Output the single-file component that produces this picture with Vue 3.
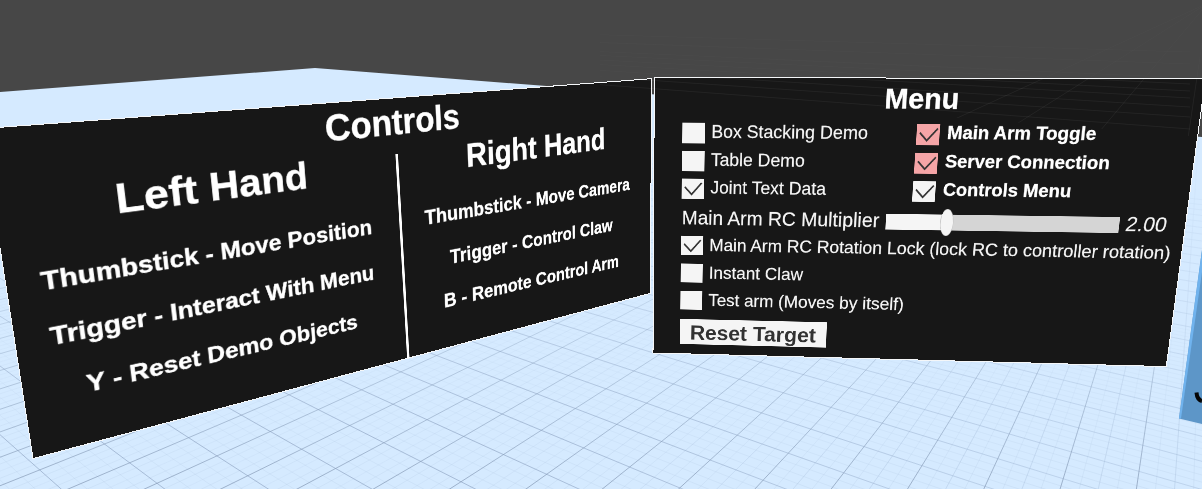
<script setup>
import { ref } from 'vue'

// Column-major matrix3d that maps a w x h box onto four screen corners (tl, tr, br, bl).
function project(w, h, [[x0, y0], [x1, y1], [x2, y2], [x3, y3]]) {
  const dx1 = x1 - x2, dx2 = x3 - x2, dx3 = x0 - x1 + x2 - x3
  const dy1 = y1 - y2, dy2 = y3 - y2, dy3 = y0 - y1 + y2 - y3
  const d = dx1 * dy2 - dx2 * dy1
  const g = (dx3 * dy2 - dx2 * dy3) / d
  const k = (dx1 * dy3 - dx3 * dy1) / d
  const m = [
    (x1 - x0 + g * x1) / w, (y1 - y0 + g * y1) / w, 0, g / w,
    (x3 - x0 + k * x3) / h, (y3 - y0 + k * y3) / h, 0, k / h,
    0, 0, 1, 0,
    x0, y0, 0, 1
  ]
  return { transform: `matrix3d(${m.map(n => n.toFixed(9)).join(',')})` }
}

const controlsQuad = [[-18.7, 128.7], [651.5, 78.7], [650.5, 293.3], [33, 458.6]]
const menuQuad = [[654.3, 77.5], [1205.5, 78.7], [1166.3, 366.6], [653, 353]]
const points = quad => quad.map(p => p.join(',')).join(' ')

// Floor grid in perspective: u lines run to the right vanishing point, v lines to the left one.
const VR = [1208, 3], VL = [-486, 3]
const bottomX = u => 220.8 + 76.3 * u
const slope = v => 401.3 / (879.3 + 85.5 * v)
const uLine = u => ({ x1: VR[0], y1: VR[1], x2: VR[0] + (bottomX(u) - VR[0]) * 1.1, y2: 3 + 486 * 1.1 })
const vLine = v => ({ x1: VL[0], y1: VL[1], x2: 1300, y2: VL[1] + slope(v) * (1300 - VL[0]) })
const range = (a, b, step) => Array.from({ length: Math.round((b - a) / step) + 1 }, (_, i) => a + i * step)
const us = range(-14, 16, 0.25), vs = range(-6, 30, 0.25)
const whole = n => n % 1 === 0
const uMajor = us.filter(whole).map(uLine)
const vMajor = vs.filter(whole).map(vLine)
const half = us.filter(n => !whole(n) && n * 2 % 1 === 0).map(uLine)
const minor = [...us.filter(n => n * 2 % 1 !== 0).map(uLine), ...vs.filter(n => !whole(n) && n < 14).map(vLine)]

// Distant grid that shows faintly above the floor's far edge.
const far = [
  ...[148, 439, 798, 1136].map(x => ({ x1: VR[0], y1: VR[1], x2: x, y2: 489 })),
  ...[52, 64, 78, 84, 91, 98, 107, 117, 129].map(y => ({ x1: VL[0], y1: VL[1], x2: 1190, y2: y }))
]

const left = ['Thumbstick - Move Position', 'Trigger - Interact With Menu', 'Y - Reset Demo Objects']
const right = ['Thumbstick - Move Camera', 'Trigger - Control Claw', 'B - Remote Control Arm']

const demos = ref([
  { label: 'Box Stacking Demo', on: false },
  { label: 'Table Demo', on: false },
  { label: 'Joint Text Data', on: true }
])
const toggles = ref([
  { label: 'Main Arm Toggle', on: true, red: true },
  { label: 'Server Connection', on: true, red: true },
  { label: 'Controls Menu', on: true }
])
const options = ref([
  { label: 'Main Arm RC Rotation Lock (lock RC to controller rotation)', on: true },
  { label: 'Instant Claw', on: false },
  { label: 'Test arm (Moves by itself)', on: false }
])
</script>

<template>
  <div class="scene">
    <svg class="world" width="1202" height="489" viewBox="0 0 1202 489">
      <defs>
        <clipPath id="floor"><path d="M0 92 L315 68 L1202 137 V489 H0Z" /></clipPath>
        <clipPath id="beyond"><path d="M600 81 L654 78 H1202 V137 L600 90Z" /></clipPath>
        <clipPath id="sky"><path d="M600 0 H1202 V77 H600Z" /></clipPath>
        <linearGradient id="fadeMajor" gradientUnits="userSpaceOnUse" x1="0" y1="120" x2="0" y2="489">
          <stop offset="0" stop-color="#8ea6c2" stop-opacity="0" />
          <stop offset=".4" stop-color="#8ea6c2" stop-opacity=".22" />
          <stop offset="1" stop-color="#8599b5" stop-opacity=".72" />
        </linearGradient>
        <linearGradient id="fadeMinor" gradientUnits="userSpaceOnUse" x1="0" y1="220" x2="0" y2="489">
          <stop offset="0" stop-color="#9db4d2" stop-opacity="0" />
          <stop offset="1" stop-color="#9db4d2" stop-opacity=".2" />
        </linearGradient>
        <linearGradient id="fadeAcross" gradientUnits="userSpaceOnUse" x1="500" y1="0" x2="1100" y2="0">
          <stop offset="0" stop-color="#8a9fbe" stop-opacity=".62" />
          <stop offset="1" stop-color="#9db4d2" stop-opacity=".42" />
        </linearGradient>
        <linearGradient id="fadeHalf" gradientUnits="userSpaceOnUse" x1="400" y1="0" x2="900" y2="0">
          <stop offset="0" stop-color="#9db4d2" stop-opacity=".1" />
          <stop offset="1" stop-color="#9db4d2" stop-opacity=".32" />
        </linearGradient>
        <linearGradient id="depth" gradientUnits="userSpaceOnUse" x1="0" y1="130" x2="0" y2="430">
          <stop offset="0" stop-color="#000" />
          <stop offset="1" stop-color="#fff" />
        </linearGradient>
        <mask id="near" maskUnits="userSpaceOnUse" x="0" y="0" width="1202" height="489">
          <rect width="1202" height="489" fill="url(#depth)" />
        </mask>
      </defs>
      <rect width="1202" height="489" fill="#474747" />
      <g clip-path="url(#floor)">
        <rect width="1202" height="489" fill="#d5eaff" />
        <line v-for="(l, i) in minor" :key="i" v-bind="l" stroke="url(#fadeMinor)" stroke-width=".8" />
        <g mask="url(#near)">
          <line v-for="(l, i) in half" :key="i" v-bind="l" stroke="url(#fadeHalf)" />
          <line v-for="(l, i) in vMajor" :key="i" v-bind="l" stroke="url(#fadeAcross)" />
        </g>
        <line v-for="(l, i) in uMajor" :key="i" v-bind="l" stroke="url(#fadeMajor)" />
      </g>
      <path d="M1202 250 L1179 418.5 L1202 424Z" fill="#5d96c8" />
      <path d="M1202 250 L1179 418.5 H1181 L1202 272Z" fill="#70b3ee" />
      <path d="M1196.5 392.5 Q1197 399.5 1202 401" fill="none" stroke="#050505" stroke-width="4" />
      <g class="slabs">
        <polygon :points="points(controlsQuad)" />
        <polygon :points="points(menuQuad)" />
      </g>
      <g clip-path="url(#beyond)">
        <line v-for="(l, i) in far" :key="i" v-bind="l" stroke="#fff" stroke-opacity=".055" />
      </g>
      <g clip-path="url(#sky)">
        <line v-for="(l, i) in far" :key="i" v-bind="l" stroke="#fff" stroke-opacity=".014" />
      </g>
    </svg>

    <section class="panel controls" :style="project(984, 400, controlsQuad)">
      <h1>Controls</h1>
      <div class="hands">
        <div class="hand">
          <h2>Left Hand</h2>
          <p v-for="t in left" :key="t">{{ t }}</p>
        </div>
        <div class="divider"></div>
        <div class="hand right">
          <h2>Right Hand</h2>
          <p v-for="t in right" :key="t">{{ t }}</p>
        </div>
      </div>
    </section>

    <section class="panel menu" :style="project(920, 500, menuQuad)">
      <h1>Menu</h1>
      <div class="columns">
        <div class="list">
          <div v-for="o in demos" :key="o.label" class="option" @click="o.on = !o.on">
            <span class="box"><svg v-if="o.on" viewBox="0 0 40 36"><path d="M5.5 15 L18 28.5 L36 7.5" /></svg></span>
            <span>{{ o.label }}</span>
          </div>
        </div>
        <div class="list bold">
          <div v-for="o in toggles" :key="o.label" class="option" @click="o.on = !o.on">
            <span class="box" :class="{ red: o.red }"><svg v-if="o.on" viewBox="0 0 40 36"><path d="M5.5 15 L18 28.5 L36 7.5" /></svg></span>
            <span>{{ o.label }}</span>
          </div>
        </div>
      </div>
      <div class="multiplier">
        <span class="name">Main Arm RC Multiplier</span>
        <div class="slider"><i class="fill"></i><i class="handle"></i><i class="rest"></i></div>
        <span class="value">2.00</span>
      </div>
      <div class="list lower">
        <div v-for="o in options" :key="o.label" class="option" @click="o.on = !o.on">
          <span class="box"><svg v-if="o.on" viewBox="0 0 40 36"><path d="M5.5 15 L18 28.5 L36 7.5" /></svg></span>
          <span>{{ o.label }}</span>
        </div>
      </div>
      <button>Reset Target</button>
    </section>
  </div>
</template>

<style>
body { margin: 0; overflow: hidden; }
</style>

<style scoped>
.scene { position: relative; width: 1202px; height: 489px; overflow: hidden; font-family: "Liberation Sans", Arial, sans-serif; color: #fff; }
.world { display: block; }
.slabs polygon { fill: #171717; stroke: #f4f6f8; stroke-width: 1; shape-rendering: crispEdges; }
.panel { position: absolute; left: 0; top: 0; transform-origin: 0 0; box-sizing: border-box; white-space: nowrap; }
h1, h2, p { margin: 0; text-align: center; font-weight: bold; }

.controls { width: 984px; height: 400px; padding-top: 5.5px; -webkit-text-stroke: .5px #fff; }
.controls h1 { font-size: 51px; line-height: 60px; }
.hands { display: flex; align-items: flex-start; margin-top: 2.2px; }
.hand { width: 480px; }
.hand h2 { font-size: 51.2px; line-height: 60px; margin-bottom: 22px; }
.hand p { font-size: 31px; line-height: 69px; }
.divider { width: 4.4px; height: 318px; margin: 14px 0 0 8.6px; background: #fff; }
.right { width: 478px; }
.right h2 { padding-left: 20px; }

.menu { width: 920px; height: 500px; padding-top: 6.4px; }
.menu h1 { font-size: 48px; line-height: 57px; margin-bottom: -1px; -webkit-text-stroke: .5px #fff; }
.columns { display: grid; grid-template-columns: 404.5px 1fr; margin: 15.1px 0 0 50px; }
.option { display: flex; align-items: flex-start; gap: 11.5px; height: 49px; font-size: 30.9px; line-height: 31px; color: #f5f5f5; -webkit-text-stroke: .3px #f5f5f5; }
.bold .option { font-weight: bold; font-size: 31px; gap: 12.5px; color: #fff; line-height: 30px; -webkit-text-stroke: .5px #fff; }
.box { flex: none; width: 39.7px; height: 35.4px; background: #f5f5f5; }
.box.red { background: #f5a5a7; }
.box svg { display: block; width: 39.7px; height: 35.4px; }
.box path { fill: none; stroke: #323232; stroke-width: 3; }
.multiplier { display: flex; align-items: center; height: 40px; margin: 0.5px 0 0 51px; line-height: 40px; color: #f5f5f5; -webkit-text-stroke: .3px #f5f5f5; }
.name { width: 360.7px; font-size: 34.2px; }
.slider { position: relative; width: 398.5px; height: 28px; margin-top: 4px; display: flex; align-items: center; }
.fill { width: 105px; height: 28px; background: #f5f5f5; }
.rest { flex: 1; height: 28px; background: #d5d5d5; }
.handle { position: absolute; left: 94px; top: -10px; width: 23px; height: 48px; box-sizing: border-box; border-radius: 50%; background: #f5f5f5; border: 1px solid #c4c4c4; }
.value { margin-left: 10.5px; font-size: 35px; transform: skewX(-5deg); }
.lower { margin: 13px 0 0 50px; }
.lower .option { height: 50.8px; line-height: 33px; }
button { display: block; margin: 2.6px 0 0 49.8px; padding: 0; width: 268px; height: 48.5px; border: 0; background: #f5f5f5; color: #323232; font: bold 38.6px/51px "Liberation Sans", Arial, sans-serif; }
</style>
